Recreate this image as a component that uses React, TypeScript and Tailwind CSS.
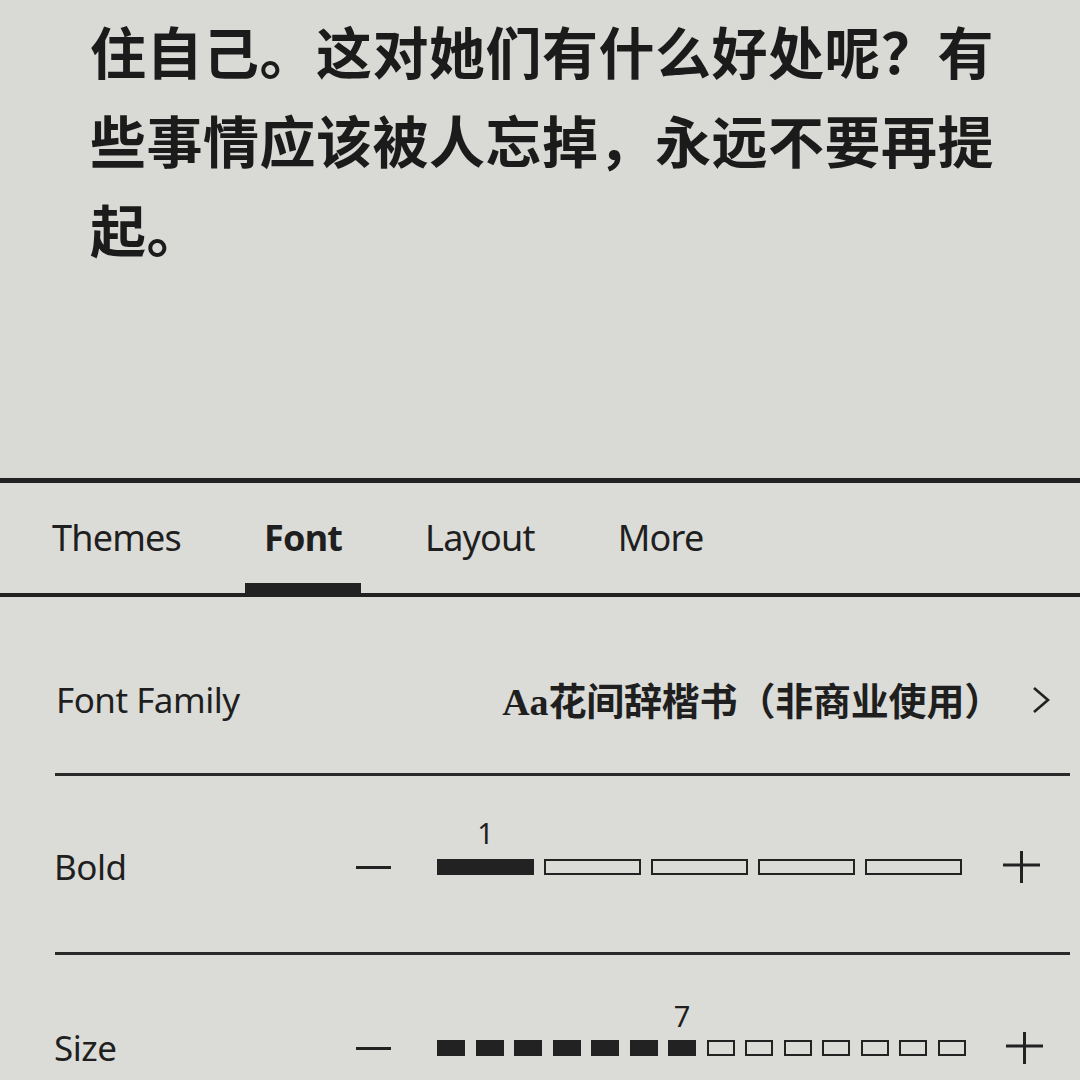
import React from "react";

function Minus() {
  return <div className="w-[35px] h-[3px] bg-[#222]" />;
}

function Plus() {
  return (
    <svg width="37" height="32" viewBox="0 0 37 32">
      <line x1="0" y1="14" x2="37" y2="14" stroke="#222" strokeWidth="3" />
      <line x1="18.5" y1="0" x2="18.5" y2="32" stroke="#222" strokeWidth="3" />
    </svg>
  );
}

function Chevron() {
  return (
    <svg width="18" height="28" viewBox="0 0 18 28">
      <polyline points="2,2 16,14 2,26" fill="none" stroke="#222" strokeWidth="2.6" />
    </svg>
  );
}

export default function App() {
  const boldBars = [0, 1, 2, 3, 4];
  const sizeSquares = Array.from({ length: 14 }, (_, i) => i);
  return (
    <div className="w-[1080px] h-[1080px] overflow-hidden bg-[#d9dad6] text-[#1f1f1f] font-['Noto_Sans','Noto_Sans_CJK_SC',sans-serif]">
      {/* Reading text */}
      <div className="h-[478px] pl-[90px] pt-[5px] font-['Noto_Sans_CJK_SC',sans-serif] font-bold text-[56px] leading-[89px] tracking-[0.5px] text-[#1b1b1b] whitespace-nowrap">
        <div>住自己。这对她们有什么好处呢？有</div>
        <div>些事情应该被人忘掉，永远不要再提</div>
        <div>起。</div>
      </div>

      <div className="h-[5px] bg-[#222]" />

      {/* Tabs */}
      <div className="h-[110px] flex items-stretch pl-[52px] gap-[83px] text-[36px] tracking-[-0.8px] bg-[#dbdcd8]">
        <div className="flex items-center">Themes</div>
        <div className="relative flex items-center font-bold">
          Font
          <div className="absolute bottom-0 left-[-19px] right-[-19px] h-[10px] bg-[#222]" />
        </div>
        <div className="flex items-center">Layout</div>
        <div className="flex items-center">More</div>
      </div>

      <div className="h-[4px] bg-[#222]" />

      <div className="bg-[#dbdcd8]">
        {/* Font Family row */}
        <div className="h-[176px] pt-[30px] flex items-center justify-between pl-[56px] pr-[30px]">
          <div className="text-[35px] tracking-[-0.5px]">Font Family</div>
          <div className="flex items-center gap-[30px]">
            <div className="font-bold text-[38px] tracking-[-0.2px]">
              <span className="font-['Liberation_Serif',serif]">Aa</span>
              <span className="font-['Noto_Sans_CJK_SC',sans-serif]">花间辞楷书（非商业使用）</span>
            </div>
            <Chevron />
          </div>
        </div>
        <div className="ml-[55px] mr-[10px] h-[3px] bg-[#2a2a2a]" />

        {/* Bold row */}
        <div className="h-[176px] pt-[6px] flex items-center">
          <div className="w-[356px] shrink-0 pl-[54px] text-[35px] tracking-[-0.5px]">Bold</div>
          <Minus />
          <div className="ml-[46px] flex gap-[10px]">
            {boldBars.map((i) => (
              <div
                key={i}
                className={
                  i === 0
                    ? "relative w-[97px] h-[16px] bg-[#222]"
                    : "relative w-[97px] h-[16px] border-2 border-[#222]"
                }
              >
                {i === 0 && (
                  <div className="absolute left-0 right-0 top-[-42px] text-center text-[29px] leading-[32px]">1</div>
                )}
              </div>
            ))}
          </div>
          <div className="ml-[41px]">
            <Plus />
          </div>
        </div>
        <div className="ml-[55px] mr-[10px] h-[3px] bg-[#2a2a2a]" />

        {/* Size row */}
        <div className="h-[180px] pt-[8px] flex items-start">
          <div className="h-[170px] flex items-center w-full">
            <div className="w-[356px] shrink-0 pl-[54px] text-[35px] tracking-[-0.5px]">Size</div>
            <Minus />
            <div className="ml-[46px] flex gap-[10.5px]">
              {sizeSquares.map((i) => (
                <div
                  key={i}
                  className={
                    i < 7
                      ? "relative w-[28px] h-[16px] bg-[#222]"
                      : "relative w-[28px] h-[16px] border-2 border-[#222]"
                  }
                >
                  {i === 6 && (
                    <div className="absolute left-0 right-0 top-[-40px] text-center text-[29px] leading-[32px]">7</div>
                  )}
                </div>
              ))}
            </div>
            <div className="ml-[40px]">
              <Plus />
            </div>
          </div>
        </div>
      </div>
    </div>
  );
}
